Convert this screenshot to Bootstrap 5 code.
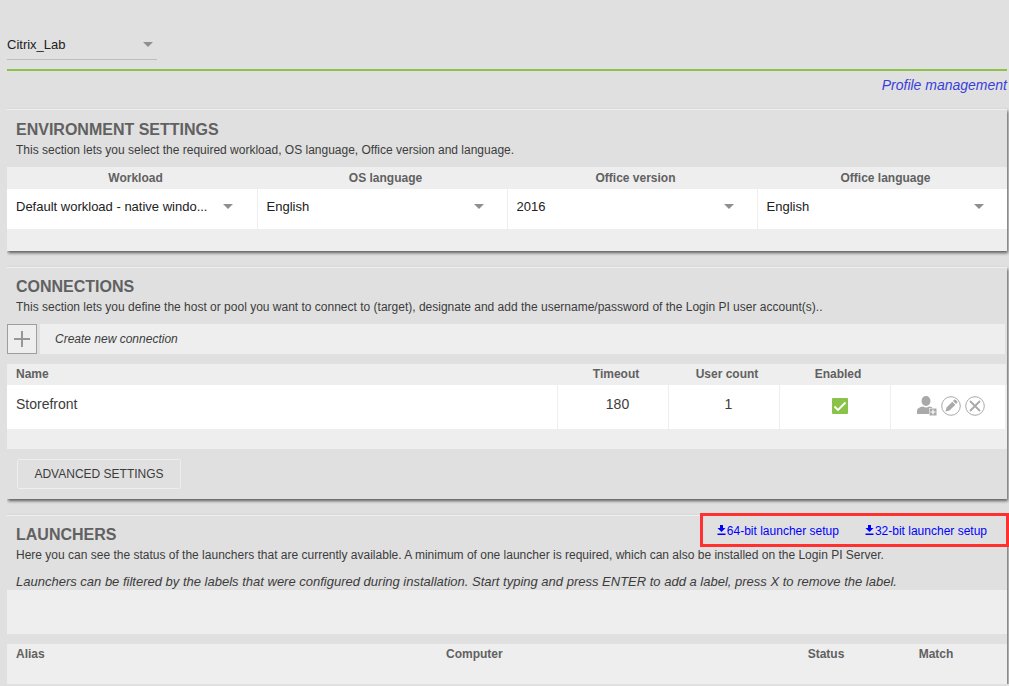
<!DOCTYPE html>
<html lang="en">
<head>
<meta charset="utf-8">
<meta name="viewport" content="width=device-width, initial-scale=1">
<title>Profile settings</title>
<link href="https://cdn.jsdelivr.net/npm/bootstrap@5.3.0/dist/css/bootstrap.min.css" rel="stylesheet">
<style>
  body { background: #e0e0e0; color: #3c3c3c; font: 12px/16px "Liberation Sans", Arial, sans-serif; }
  .page { padding: 30px 2px 0 7px; }
  .plain-select { appearance: none; border: 0; border-radius: 0; padding: 0 18px 0 0; color: #212121; font-size: 13px; line-height: 20px; height: 30px;
    background: transparent url("data:image/svg+xml,%3Csvg xmlns='http://www.w3.org/2000/svg' viewBox='0 0 10 5'%3E%3Cpath d='M0 0h10L5 5z' fill='%238f8f8f'/%3E%3C/svg%3E") no-repeat right 4px center / 10px 5px; }
  .profile-select { width: 150px; border-bottom: 1px solid #bdbdbd; }
  .topbar { border-bottom: 2px solid #8bc34a; padding-bottom: 9px; }
  .profile-link { color: #3a3fdc; font-size: 14px; line-height: 28px; height: 38px; }
  .panel { border-top: 1px solid #f0f0f0; box-shadow: 1px 2px 3px rgba(0,0,0,.6); clip-path: inset(-4px -4px -6px 0); margin-bottom: 16px; }
  .panel:last-child { margin-bottom: 0; }
  .panel-head { padding: 9px 9px 7px; }
  .env-head { padding-top: 10px; }
  h2 { font-size: 16px; line-height: 20px; font-weight: 700; color: #616161; margin: 0; }
  .panel-head p { margin: 0; line-height: 20px; }
  .grid { width: 100%; table-layout: fixed; }
  .grid th { background: #eee; color: #616161; line-height: 20px; height: 22px; padding: 0 9px; }
  .grid .text-center th:not(.text-start) { padding-left: 16px; }
  .grid td { background: #fff; border-right: 1px solid #eee; padding: 0 9px; }
  .env td { height: 40px; padding: 2px 9px 7px; }
  .env td:last-child { border-right: 0; }
  .env .plain-select { width: 221px; max-width: 100%; }
  .band { background: #eee; }
  .h-20 { height: 20px; }
  .h-22 { height: 22px; }
  .h-44 { height: 44px; }
  .add-btn { width: 30px; height: 30px; border: 1px solid #9e9e9e; background: #eee; }
  .add-label { height: 30px; line-height: 30px; padding-left: 15px; margin: 0 2px 0 3px; color: #3c3c3c; }
  .conn { margin-top: 10px; }
  .conn th { height: 21px; vertical-align: top; }
  .conn td { height: 44px; font-size: 14px; padding-bottom: 6px; }
  .conn td:not(.text-start) { padding-left: 19px; }
  .conn td:last-child { border-right-width: 2px; padding-left: 15px; }
  .check-green { appearance: none; display: block; width: 16px; height: 16px; border-radius: 1px; margin: 4px auto 0;
    background: #8bc34a url("data:image/svg+xml,%3Csvg xmlns='http://www.w3.org/2000/svg' viewBox='0 0 16 16'%3E%3Cpath d='M2.5 8.5l3.500 3.500 7.500-7.500' fill='none' stroke='white' stroke-width='1.800'/%3E%3C/svg%3E"); }
  .icon-btn { border: 0; background: none; padding: 0; line-height: 0; }
  .adv { padding: 10px; }
  .adv-btn { display: block; height: 30px; width: 164px; border: 1px solid #eee; border-radius: 2px; background: transparent; color: #3c3c3c; font-size: 12px; }
  .downloads { top: -3px; right: -2px; height: 34px; border: 3px solid #ff3030; padding: 1px 19px 0 14px; gap: 26px; }
  .downloads a { color: #00f; line-height: 16px; }
  .hint { font-size: 13px; height: 25px; padding-top: 7px; }
  .launch { margin-top: 10px; }
  .launch th { height: 40px; vertical-align: top; }
</style>
</head>
<body>
<main class="page">
  <header class="topbar">
    <select class="plain-select profile-select d-block" aria-label="Profile"><option>Citrix_Lab</option></select>
  </header>
  <div class="profile-link text-end"><a href="#" class="text-reset text-decoration-none fst-italic">Profile management</a></div>

  <section class="panel">
    <div class="panel-head env-head">
      <h2>ENVIRONMENT SETTINGS</h2>
      <p>This section lets you select the required workload, OS language, Office version and language.</p>
    </div>
    <table class="grid env">
      <thead><tr class="text-center"><th id="wl">Workload</th><th id="os">OS language</th><th id="ov">Office version</th><th id="ol">Office language</th></tr></thead>
      <tbody><tr>
        <td><select class="plain-select" aria-labelledby="wl"><option>Default workload - native windo...</option></select></td>
        <td><select class="plain-select" aria-labelledby="os"><option>English</option></select></td>
        <td><select class="plain-select" aria-labelledby="ov"><option>2016</option></select></td>
        <td><select class="plain-select" aria-labelledby="ol"><option>English</option></select></td>
      </tr></tbody>
    </table>
    <div class="band h-22"></div>
  </section>

  <section class="panel">
    <div class="panel-head">
      <h2>CONNECTIONS</h2>
      <p>This section lets you define the host or pool you want to connect to (target), designate and add the username/password of the Login PI user account(s)..</p>
    </div>
    <div class="d-flex">
      <button type="button" id="add" class="add-btn p-0 d-flex align-items-center justify-content-center" aria-label="Create new connection">
        <svg width="16" height="16" viewBox="0 0 16 16"><path d="M8 0v16M0 8h16" stroke="#979797" stroke-width="2"/></svg>
      </button>
      <label for="add" class="add-label band flex-grow-1 fst-italic">Create new connection</label>
    </div>
    <table class="grid conn">
      <colgroup><col><col style="width:111px"><col style="width:111px"><col style="width:111px"><col style="width:116px"></colgroup>
      <thead><tr class="text-center"><th class="text-start">Name</th><th>Timeout</th><th>User count</th><th id="en">Enabled</th><th></th></tr></thead>
      <tbody><tr class="text-center">
        <td class="text-start">Storefront</td><td>180</td><td>1</td>
        <td><input type="checkbox" class="check-green" checked aria-labelledby="en"></td>
        <td><div class="d-flex justify-content-center pt-1 gap-1">
          <button type="button" class="icon-btn" aria-label="Add user"><svg width="20" height="20" viewBox="0 0 20 20" fill="#a9a9a9"><ellipse cx="9" cy="5" rx="4.500" ry="5"/><path d="M0 18v-2.500C0 12 3 11 6 10.500c2 1.200 4 1.200 6 0 1.500.2 3 .5 3.500 1.500H12v6z"/><path d="M12.500 12.500h7v7h-7z"/><path d="M16 13.500v5M13.500 16h5" stroke="#fff" stroke-width="1.200"/></svg></button>
          <button type="button" class="icon-btn" aria-label="Edit"><svg width="20" height="20" viewBox="0 0 20 20"><circle cx="10" cy="10" r="9.300" fill="none" stroke="#a9a9a9"/><path d="M4.500 15.500l1-4 5.800-5.800 3 3-5.800 5.800zM12 5l1.200-1.200q.7-.7 1.400 0l1.600 1.600q.7.7 0 1.400L15 8z" fill="#a9a9a9"/></svg></button>
          <button type="button" class="icon-btn" aria-label="Delete"><svg width="20" height="20" viewBox="0 0 20 20" fill="none" stroke="#a9a9a9"><circle cx="10" cy="10" r="9.300"/><path d="M5 5l10 10M15 5L5 15" stroke-width="1.800"/></svg></button>
        </div></td>
      </tr></tbody>
    </table>
    <div class="band h-20"></div>
    <div class="adv"><button type="button" class="adv-btn">ADVANCED SETTINGS</button></div>
  </section>

  <section class="panel position-relative">
    <div class="panel-head pb-0">
      <h2>LAUNCHERS</h2>
      <p>Here you can see the status of the launchers that are currently available. A minimum of one launcher is required, which can also be installed on the Login PI Server.</p>
      <p class="hint fst-italic">Launchers can be filtered by the labels that were configured during installation. Start typing and press ENTER to add a label, press X to remove the label.</p>
    </div>
    <div class="downloads position-absolute d-flex align-items-center">
      <a href="#" class="text-decoration-none"><svg class="align-baseline" width="10" height="10" viewBox="0 0 10 10"><path d="M3 0h3v3h2.500l-4 4-4-4H3zM.5 8.500h8V10h-8z" fill="#00f"/></svg>64-bit launcher setup</a>
      <a href="#" class="text-decoration-none"><svg class="align-baseline" width="10" height="10" viewBox="0 0 10 10"><path d="M3 0h3v3h2.500l-4 4-4-4H3zM.5 8.500h8V10h-8z" fill="#00f"/></svg>32-bit launcher setup</a>
    </div>
    <div class="band h-44"></div>
    <table class="grid launch">
      <colgroup><col style="width:43%"><col><col style="width:11%"><col style="width:11%"><col style="width:16px"></colgroup>
      <thead><tr><th>Alias</th><th>Computer</th><th class="text-center">Status</th><th class="text-center">Match</th><th class="p-0"></th></tr></thead>
    </table>
  </section>
</main>
<script src="https://cdn.jsdelivr.net/npm/bootstrap@5.3.0/dist/js/bootstrap.bundle.min.js"></script>
</body>
</html>
